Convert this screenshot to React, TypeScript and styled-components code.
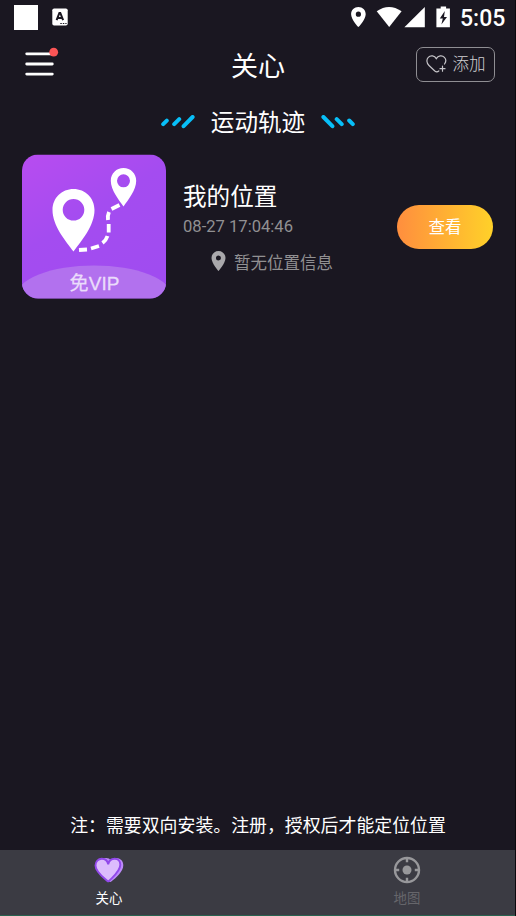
import React from "react";
import styled, { createGlobalStyle } from "styled-components";

const Global = createGlobalStyle`
  * { box-sizing: border-box; }
  body { margin: 0; background: #1a1721; }
`;

const Screen = styled.div`
  width: 516px;
  height: 916px;
  display: flex;
  flex-direction: column;
  background: #1a1721;
  border-right: 1px solid #0b080d;
  color: #fff;
  font-family: Roboto, "Noto Sans CJK SC", sans-serif;
  overflow: hidden;
`;

const StatusBar = styled.div`
  height: 35px;
  flex: none;
  display: flex;
  justify-content: space-between;
  padding: 5px 11px 0 13.5px;
`;

const StatusGroup = styled.div`
  display: flex;
  align-items: flex-start;
`;

const BlankNotice = styled.div`
  width: 24.5px;
  height: 24.5px;
  background: #fff;
  margin-right: 14px;
`;

const Clock = styled.span`
  font-size: 23px;
  font-weight: 500;
  line-height: 27px;
  width: 44px;
  white-space: nowrap;
`;

const Header = styled.header`
  height: 60px;
  flex: none;
  display: grid;
  grid-template-columns: 120px 1fr 120px;
  align-items: start;
  padding: 12px 20px 0 21px;
`;

const MenuButton = styled.button`
  border: 0;
  padding: 0 0 0 4px;
  background: none;
  display: flex;
`;

const Title = styled.h1`
  margin: 0;
  font-size: 27px;
  line-height: 40px;
  font-weight: 400;
  text-align: center;
`;

const AddButton = styled.button`
  justify-self: end;
  width: 79px;
  height: 35px;
  display: flex;
  align-items: center;
  gap: 5.5px;
  padding: 0 0 1px 9px;
  border: 1.4px solid #8f8e93;
  border-radius: 7px;
  background: none;
  color: #d0cfd2;
  font: 300 16.5px/24px Roboto, "Noto Sans CJK SC", sans-serif;
  white-space: nowrap;
`;

const AddLabel = styled.span`
  padding-top: 2px;
`;

const SectionTitle = styled.h2`
  height: 54px;
  flex: none;
  margin: 0;
  padding: 1px 0 0 1px;
  display: flex;
  align-items: center;
  justify-content: center;
  gap: 16px;
  font-size: 23.6px;
  line-height: 34px;
  font-weight: 400;

  svg {
    margin-bottom: 2px;
  }
`;

const Card = styled.section`
  display: flex;
  padding: 5.5px 22px 0 22px;
`;

const Info = styled.div`
  flex: 1;
  padding: 25.5px 0 0 17px;
`;

const Name = styled.div`
  font-size: 23.6px;
  line-height: 34px;
`;

const Time = styled.div`
  font-size: 16.6px;
  line-height: 24px;
  color: #919092;
  margin-top: 1px;
`;

const Place = styled.div`
  display: flex;
  align-items: flex-start;
  gap: 8px;
  margin: 12px 0 0 28px;
  font-size: 16.5px;
  line-height: 24px;
  color: #919092;
`;

const PlaceLabel = styled.span`
  padding-top: 1px;
`;

const ViewButton = styled.button`
  width: 96px;
  height: 44px;
  margin-top: 50.5px;
  padding: 2px 0 0;
  border: 0;
  border-radius: 22px;
  background: linear-gradient(90deg, #ff8e3e, #ffd129);
  color: #fff;
  font: 400 16.5px/24px Roboto, "Noto Sans CJK SC", sans-serif;
`;

const Note = styled.p`
  margin: auto 0 11px;
  padding-left: 1px;
  text-align: center;
  font-size: 17.9px;
  line-height: 26px;
`;

const TabBar = styled.nav`
  height: 66px;
  flex: none;
  display: flex;
  justify-content: space-between;
  padding: 0 67px 0 68px;
  background: #3b3b43;
  border-bottom: 1px solid #28624f;
`;

const Tab = styled.div<{ $active?: boolean }>`
  width: 82px;
  display: flex;
  flex-direction: column;
  align-items: center;
  padding-top: 5px;
  gap: 4px;
  font-size: 13.4px;
  line-height: 20px;
  color: ${(p) => (p.$active ? "#fff" : "#66666b")};
`;

const IconSlot = styled.div`
  height: 30px;
  display: flex;
  align-items: center;
`;

const KeyboardSlot = styled.div`
  padding-top: 3px;
`;

const KeyboardIcon = () => (
  <svg width="16" height="18" viewBox="0 0 16 18">
    <rect x="0.3" y="0.5" width="15.4" height="17" rx="1.8" fill="#fff" />
    <path d="M4.6 12.2 7.4 5h.9l2.8 7.2M5.5 9.9h4.7" fill="none" stroke="#1a1721" strokeWidth="2" />
    <path d="M8.3 15.5h1.5M10.8 15.5h1.5M13.3 15.5h1.3" stroke="#1a1721" strokeWidth="1.2" />
  </svg>
);

const StatusIcons = () => (
  <svg width="110" height="25" viewBox="350 5 110 25">
    <path fill="#fff" fillRule="evenodd" d="M358.4 7c-4.1 0-7.3 3.1-7.3 7.2 0 5.4 7.3 12.9 7.3 12.9s7.3-7.5 7.3-12.9c0-4.1-3.2-7.2-7.3-7.2zm0 4.6a2.6 2.6 0 1 1 0 5.2 2.6 2.6 0 0 1 0-5.2z" />
    <path fill="#fff" d="M376.7 11.3Q389 2.7 401.6 11.3L389.2 27z" />
    <path fill="#fff" d="M424.8 7v20.3h-20.4z" />
    <path fill="#fff" d="M440.7 6.4h5.4v2.2h3.8v18.7h-13.5V8.6h4.3z" />
    <path fill="#1a1721" d="m444.8 11-5 7.5h3l-1.4 6 5.6-7.5h-3z" />
  </svg>
);

const MenuIcon = () => (
  <svg width="34" height="30" viewBox="25 47 34 30">
    <path d="M26.7 53.8h26M26.7 64h25.6M26.7 74.1h25.6" stroke="#fff" strokeWidth="2.8" strokeLinecap="round" />
    <circle cx="53.7" cy="52.2" r="4.4" fill="#fb5556" />
  </svg>
);

const HeartPlusIcon = () => (
  <svg width="21" height="20" viewBox="0 0 21 20" fill="none" stroke="#c6c5c9" strokeWidth="1.2" strokeLinecap="round">
    <path d="M12.8 17c-1.1 1-2.8 1-4 0L3 11.5C.4 9 .3 5.3 2.3 3.3c2.2-2.2 6.3-1.8 8 1.3 1.8-3.1 5.9-3.5 8.1-1.3 1.8 1.8 1.7 4.4.1 6.7M14 14.7h5M16.5 12.2v5" />
  </svg>
);

const Dashes = ({ flip }: { flip?: boolean }) => (
  <svg width="34" height="14" viewBox="0 0 34 14">
    <path
      d={flip ? "M2.4 2 11.4 11.2M15.7 4.2l5 5M28.2 5.5l3.6 3.6" : "M2.2 9.2l3.6-3.6M13.2 9.2l5-5M22.6 11.2l9-9.2"}
      stroke="#08bff8"
      strokeWidth="4"
      strokeLinecap="round"
    />
  </svg>
);

const RouteIcon = () => (
  <svg width="144" height="144" viewBox="0 0.5 144 144" overflow="visible">
    <defs>
      <linearGradient id="tile" x1="0" y1="0" x2=".6" y2="1">
        <stop offset="0" stopColor="#b84cf0" />
        <stop offset=".5" stopColor="#a44cf0" />
        <stop offset="1" stopColor="#a04cf0" />
      </linearGradient>
      <clipPath id="round"><rect width="144" height="144" rx="16" /></clipPath>
    </defs>
    <g clipPath="url(#round)">
      <rect width="144" height="144" fill="url(#tile)" />
      <ellipse cx="72" cy="142" rx="78" ry="31" fill="#b271ee" />
    </g>
    <path fill="#fff" fillRule="evenodd" d="M51.5 34.5c-11.8 0-21 9-21 21 0 15.5 13 31 21 41.5 8-10.500 21-26 21-41.500 0-12-9.200-21-21-21zm0 10a10.800 10.800 0 1 1 0 21.600 10.800 10.800 0 0 1 0-21.600z" />
    <path fill="#fff" fillRule="evenodd" d="M101.500 13.500c-7.100 0-12.700 5.500-12.700 12.700 0 9.300 7.900 19 12.700 25.800 4.800-6.800 12.700-16.500 12.700-25.800 0-7.200-5.600-12.700-12.700-12.700zm0 6.300a6.500 6.500 0 1 1 0 13 6.500 6.500 0 0 1 0-13z" />
    <path d="M57 95.500 65 95M69 94 77 91.500M80.500 88.500Q84 86 85.500 81.500M86.700 78V69.500M86 65.500Q85.400 61 87 57.500M89.500 54.500 97.500 50.500" fill="none" stroke="#fff" strokeWidth="3.800" />
    <text x="72.500" y="135" textAnchor="middle" fontSize="19" textLength="50" fontFamily="'Liberation Sans', 'Noto Sans CJK SC', sans-serif" fill="#eadcfb" stroke="#eadcfb" strokeWidth=".3">免VIP</text>
  </svg>
);

const HeartIcon = () => (
  <svg width="30" height="26" viewBox="0 0 30 26">
    <path d="M15.5 24.8C11 21 5 15 5 8.5 5 4 8 1 12 1c2.2 0 3.8.7 5 2 1.3-1.3 3-2 5-2 4.3 0 7.3 3 7.3 7.2 0 6.6-7.5 12.6-12 16.4-.6.5-1.2.6-1.8.2z" fill="#bd8bfa" />
    <path d="M13.5 24C9 20 1.5 15 1.5 8.5c0-4 2.8-6.7 6.3-6.7 3.2 0 5.700 2 6.400 5.600.7-3.600 3.500-5.600 6.500-5.600 3.300 0 5.600 2.500 5.600 6 0 6.500-7 11.700-11.300 16.200q-.8.700-1.500 0z" fill="#dcbcfd" stroke="#9148ea" strokeWidth="1.900" />
  </svg>
);

const TargetIcon = () => (
  <svg width="28" height="28" viewBox="0 0 28 28" fill="none" stroke="#98989b">
    <circle cx="14" cy="14" r="12" strokeWidth="2.400" />
    <path d="M14 2v4.200M14 21.800V26M2 14h4.200M21.800 14H26" strokeWidth="2.400" />
    <circle cx="14" cy="14" r="4.500" fill="#98989b" stroke="none" />
  </svg>
);

const PinIcon = () => (
  <svg width="15" height="20" viewBox="5 2 14 20">
    <path d="M12 2C8.130 2 5 5.130 5 9c0 5.250 7 13 7 13s7-7.750 7-13c0-3.870-3.130-7-7-7zm0 9.500a2.500 2.500 0 1 1 0-5 2.500 2.500 0 0 1 0 5z" fill="#a9a8ab" />
  </svg>
);

export default function App() {
  return (
    <>
      <Global />
      <Screen>
        <StatusBar>
          <StatusGroup>
            <BlankNotice />
            <KeyboardSlot><KeyboardIcon /></KeyboardSlot>
          </StatusGroup>
          <StatusGroup>
            <StatusIcons />
            <Clock>5:05</Clock>
          </StatusGroup>
        </StatusBar>
        <Header>
          <MenuButton aria-label="菜单"><MenuIcon /></MenuButton>
          <Title>关心</Title>
          <AddButton><HeartPlusIcon /><AddLabel>添加</AddLabel></AddButton>
        </Header>
        <SectionTitle><Dashes />运动轨迹<Dashes flip /></SectionTitle>
        <Card>
          <RouteIcon />
          <Info>
            <Name>我的位置</Name>
            <Time>08-27 17:04:46</Time>
            <Place><PinIcon /><PlaceLabel>暂无位置信息</PlaceLabel></Place>
          </Info>
          <ViewButton>查看</ViewButton>
        </Card>
        <Note>注：需要双向安装。注册，授权后才能定位位置</Note>
        <TabBar>
          <Tab $active><IconSlot><HeartIcon /></IconSlot>关心</Tab>
          <Tab><IconSlot><TargetIcon /></IconSlot>地图</Tab>
        </TabBar>
      </Screen>
    </>
  );
}
